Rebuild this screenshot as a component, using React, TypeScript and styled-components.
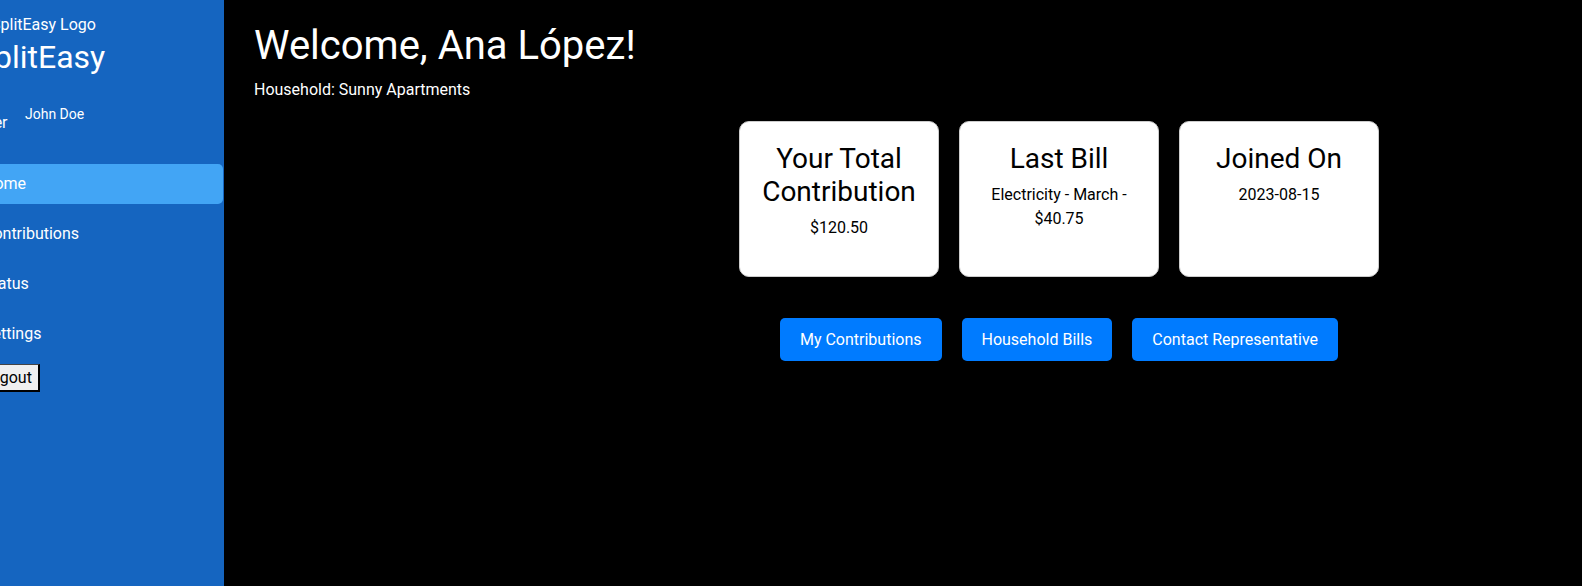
import React from "react";
import styled, { createGlobalStyle } from "styled-components";

const GlobalStyle = createGlobalStyle`
  html, body {
    margin: 0;
    padding: 0;
    background: #000;
  }
  body {
    font-family: Roboto, "Noto Sans", Arial, sans-serif;
  }
  * {
    box-sizing: border-box;
  }
`;

const Layout = styled.div`
  display: flex;
  min-height: 100vh;
  background: #000;
`;

const Sidebar = styled.aside`
  flex: 0 0 224px;
  width: 224px;
  overflow: hidden;
  background: #1565c0;
  color: #fff;
`;

const SidebarInner = styled.div`
  display: flex;
  flex-direction: column;
  margin-left: -25px;
  padding: 14px 1px 20px 0;
`;

const LogoAlt = styled.span`
  display: block;
  font-size: 16px;
  line-height: normal;
  white-space: nowrap;

  &::before {
    content: "";
    display: inline-block;
    width: 16px;
    height: 16px;
  }
`;

const BrandTitle = styled.h1`
  margin: 4px 0 17.75px;
  font-size: 32px;
  font-weight: 400;
  line-height: normal;
  white-space: nowrap;
`;

const UserRow = styled.div`
  display: flex;
  align-items: center;
  gap: 10px;
  height: 40px;
`;

const AvatarAlt = styled.span`
  flex: 0 0 40px;
  width: 40px;
  height: 40px;
  padding-top: 19px;
  font-size: 16px;
  line-height: normal;
  white-space: nowrap;
`;

const UserName = styled.span`
  font-size: 14px;
`;

const Nav = styled.nav`
  display: flex;
  flex-direction: column;
  gap: 10px;
  margin-top: 30px;
`;

const NavLink = styled.a<{ $active?: boolean }>`
  display: block;
  padding: 10px 8px;
  line-height: 20px;
  font-size: 16px;
  color: #fff;
  text-decoration: none;
  border-radius: 5px;
  background: ${(p) => (p.$active ? "#42a5f5" : "transparent")};
`;

const LogoutButton = styled.button`
  align-self: flex-start;
  padding: 3px 6px 3px;
  font-family: Roboto, "Noto Sans", Arial, sans-serif;
  font-size: 16px;
  line-height: normal;
  color: #000;
  background: #efefef;
  border-style: solid;
  border-width: 1px 2px 2px 1px;
  border-color: #444 #000 #000 #444;
`;

const Main = styled.main`
  flex: 1;
  padding: 22px 30px;
  color: #fff;
`;

const Heading = styled.h1`
  margin: 0 0 10.5px;
  font-size: 40px;
  font-weight: 400;
  line-height: normal;
`;

const Household = styled.p`
  margin: 0;
  font-size: 16px;
`;

const Overview = styled.section`
  display: flex;
  flex-direction: column;
  align-items: center;
  gap: 41px;
  margin-top: 22px;
  padding-left: 312px;
`;

const CardRow = styled.div`
  display: flex;
  gap: 20px;
`;

const Card = styled.div`
  width: 200px;
  padding: 20px;
  background: #fff;
  border: 1px solid #ccc;
  border-radius: 10px;
  text-align: center;
  color: #000;
`;

const CardTitle = styled.h2`
  margin: 0 0 8px;
  font-size: 28px;
  font-weight: 400;
  line-height: normal;
`;

const CardValue = styled.p`
  margin: 0 0 16px;
  font-size: 16px;
  line-height: 1.5;
`;

const ActionRow = styled.div`
  display: flex;
  gap: 20px;
`;

const ActionButton = styled.button`
  padding: 12px 20px;
  font-family: Roboto, "Noto Sans", Arial, sans-serif;
  font-size: 16px;
  line-height: normal;
  color: #fff;
  background: #007bff;
  border: none;
  border-radius: 5px;
`;

const navItems = [
  { label: "Home", active: true },
  { label: "Contributions" },
  { label: "Status" },
  { label: "Settings" },
];

const cards = [
  { title: "Your Total Contribution", value: "$120.50" },
  { title: "Last Bill", value: "Electricity - March - $40.75" },
  { title: "Joined On", value: "2023-08-15" },
];

const actions = ["My Contributions", "Household Bills", "Contact Representative"];

export default function App() {
  return (
    <>
      <GlobalStyle />
      <Layout>
        <Sidebar>
          <SidebarInner>
            <LogoAlt>SplitEasy Logo</LogoAlt>
            <BrandTitle>SplitEasy</BrandTitle>
            <UserRow>
              <AvatarAlt>User</AvatarAlt>
              <UserName>John Doe</UserName>
            </UserRow>
            <Nav>
              {navItems.map((item) => (
                <NavLink key={item.label} href="#" $active={item.active}>
                  {item.label}
                </NavLink>
              ))}
              <LogoutButton>Logout</LogoutButton>
            </Nav>
          </SidebarInner>
        </Sidebar>
        <Main>
          <Heading>Welcome, Ana López!</Heading>
          <Household>Household: Sunny Apartments</Household>
          <Overview>
            <CardRow>
              {cards.map((c) => (
                <Card key={c.title}>
                  <CardTitle>{c.title}</CardTitle>
                  <CardValue>{c.value}</CardValue>
                </Card>
              ))}
            </CardRow>
            <ActionRow>
              {actions.map((a) => (
                <ActionButton key={a}>{a}</ActionButton>
              ))}
            </ActionRow>
          </Overview>
        </Main>
      </Layout>
    </>
  );
}
